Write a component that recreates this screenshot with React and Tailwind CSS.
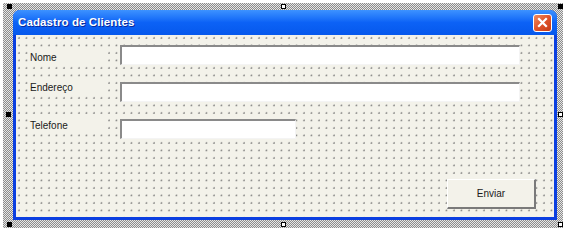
import React from 'react';

const Handle = ({ className, white }) => (
    <div className={`absolute w-[5px] h-[5px] border border-black ${white ? 'bg-white' : 'bg-black'} ${className}`}></div>
);

const Field = ({ label, width, shift }) => (
    <div className="flex items-center h-[20px]">
        <div className="w-[93px] -ml-[3px] pl-[1px] flex items-center">
            <span className={`w-[80px] h-[16px] pl-[2px] flex items-center bg-[#f3f2ea] text-[10px] text-[#1a1a1a] leading-none ${shift}`}>{label}</span>
        </div>
        <div className={`${width} h-full bg-white border-t-2 border-l-2 border-b border-r border-t-[#8a8a8a] border-l-[#8a8a8a] border-b-[#f4f4f4] border-r-[#f4f4f4]`}></div>
    </div>
);

const App = () => {
    return (
        <div className="relative w-[571px] h-[235px] bg-white p-[3px] font-['Liberation_Sans',Arial,sans-serif]">
            {/* designer selection frame */}
            <div className="w-[560px] h-[225px] pl-[10px] pr-[6px] pt-[7px] bg-[repeating-conic-gradient(#8c8c8c_0_25%,#e6e6e6_0_50%)] bg-[length:2px_2px]">
                {/* window */}
                <div className="w-[544px] h-[210px] flex flex-col rounded-t-[7px] bg-[#0a3ee0] overflow-hidden">
                    {/* title bar */}
                    <div className="h-[25px] flex items-center justify-between pl-[5px] pr-[5px] bg-gradient-to-b from-[#3d92ff] via-[#0c62f6] to-[#0658ec]">
                        <span className="text-white font-bold text-[11.5px] tracking-[0.1px] [text-shadow:1px_1px_0_#0a2a9a]">Cadastro de Clientes</span>
                        <div className="w-[19px] h-[18px] rounded-[3px] border border-white bg-gradient-to-br from-[#f08a5c] via-[#e0532a] to-[#c43a14] flex items-center justify-center">
                            <svg width="11" height="11" viewBox="0 0 11 11">
                                <path d="M2 2 L9 9 M9 2 L2 9" stroke="white" strokeWidth="2.2" strokeLinecap="square" />
                            </svg>
                        </div>
                    </div>
                    {/* body */}
                    <div className="flex-1 mx-[3px] mb-[3px] pl-[14px] pt-[10px] bg-[#f3f2ea] bg-[radial-gradient(circle_at_3px_3px,#777_0.6px,transparent_1px)] bg-[length:7.5px_7.5px] flex flex-col">
                        <div className="flex flex-col gap-[17px]">
                            <Field label="Nome" width="w-[400px]" shift="mt-[6px]" />
                            <Field label="Endereço" width="w-[400px]" shift="mb-[8px]" />
                            <Field label="Telefone" width="w-[176px]" shift="mb-[6px]" />
                        </div>
                        <div className="mt-[40px] ml-[417px] w-[89px] h-[30px] flex items-center justify-center bg-[#f3f2ea] border-t border-l border-t-white border-l-white border-r-2 border-b-2 border-r-[#7a7a7a] border-b-[#7a7a7a] text-[10px] text-[#1a1a1a]">
                            Enviar
                        </div>
                    </div>
                </div>
            </div>

            {/* selection handles */}
            <Handle className="left-[7px] top-[4px]" />
            <Handle className="left-[281px] top-[4px]" white />
            <Handle className="left-[558px] top-[4px]" />
            <Handle className="left-[6px] top-[112px]" />
            <Handle className="left-[558px] top-[112px]" white />
            <Handle className="left-[7px] top-[222px]" />
            <Handle className="left-[281px] top-[222px]" white />
            <Handle className="left-[558px] top-[222px]" white />
        </div>
    );
};

export default App;
